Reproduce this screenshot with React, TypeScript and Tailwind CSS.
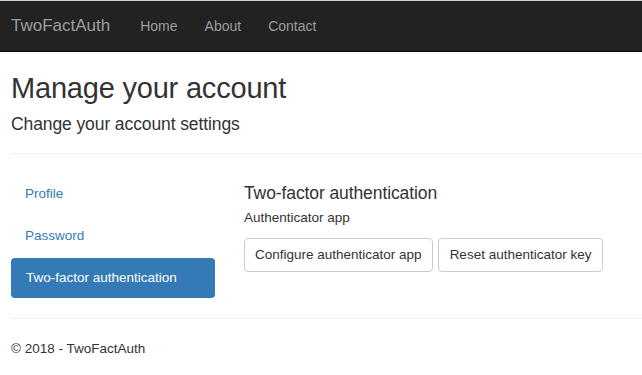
import React from "react";

const FONT = { fontFamily: '"Liberation Sans", Arial, sans-serif' };

const NAV_LINKS = ["Home", "About", "Contact"];
const PILLS = ["Profile", "Password", "Two-factor authentication"];

export default function App() {
  return (
    <div className="min-h-[375px] bg-white text-[#333] text-[13.5px] overflow-hidden" style={FONT}>
      {/* navbar-inverse */}
      <div className="h-[52px] bg-[#222] border-t border-[#cfcfcf] border-b border-b-[#080808] flex items-center">
        <span className="pl-[11px] pr-[30px] text-[17px] text-[#9d9d9d] leading-5">TwoFactAuth</span>
        <div className="flex gap-[27px]">
          {NAV_LINKS.map((l) => (
            <span key={l} className="text-[14px] text-[#9d9d9d] leading-5">
              {l}
            </span>
          ))}
        </div>
      </div>

      <div className="pl-[11px]">
        <h2 className="mt-[20px] text-[29px] tracking-[-0.2px] leading-[33px]">Manage your account</h2>
        <h4 className="mt-[9px] text-[17.5px] tracking-[-0.1px] leading-[20px]">Change your account settings</h4>
        <hr className="mt-[19px] border-t border-[#eee]" />

        <div className="flex mt-[20px]">
          <div className="w-[204px] flex flex-col gap-[2px]">
            {PILLS.map((p, i) => (
              <div
                key={p}
                className={
                  i === 2
                    ? "h-[40px] px-[15px] flex items-center rounded-[4px] bg-[#337ab7] text-white"
                    : "h-[40px] px-[14px] flex items-center text-[#337ab7]"
                }
              >
                {p}
              </div>
            ))}
          </div>

          <div className="ml-[29px]">
            <h4 className="mt-[9px] text-[17.5px] tracking-[-0.1px] leading-[20px]">Two-factor authentication</h4>
            <p className="mt-[5px] leading-5">Authenticator app</p>
            <div className="mt-[10px] flex gap-[5px]">
              <button className="h-[34px] px-[10px] border border-[#ccc] rounded-[4px] bg-white text-[#333] leading-5">
                Configure authenticator app
              </button>
              <button className="h-[34px] px-[11px] border border-[#ccc] rounded-[4px] bg-white text-[#333] leading-5">
                Reset authenticator key
              </button>
            </div>
          </div>
        </div>

        <hr className="mt-[20px] border-t border-[#eee]" />
        <footer className="mt-[20px] leading-5">© 2018 - TwoFactAuth</footer>
      </div>
    </div>
  );
}
